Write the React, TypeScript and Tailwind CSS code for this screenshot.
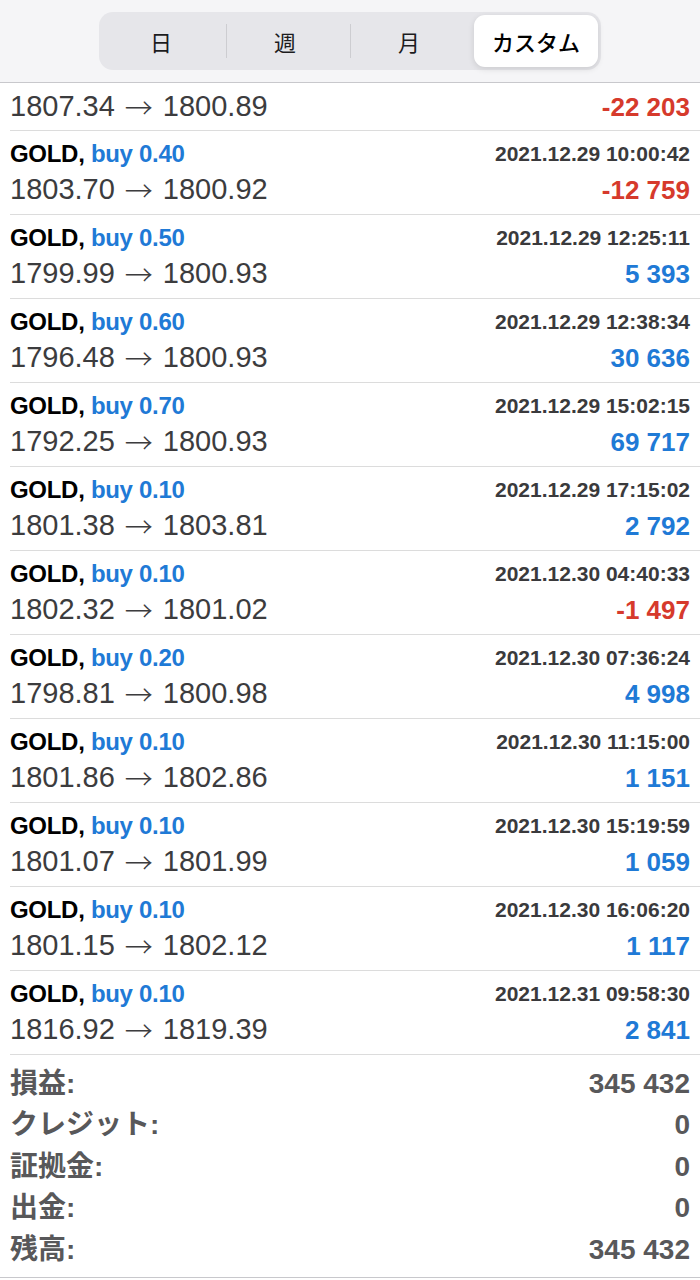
import React from 'react';

type Deal = {
  lot: string;
  time: string;
  open: string;
  close: string;
  profit: string;
};

const firstRow = { open: '1807.34', close: '1800.89', profit: '-22 203' };

const deals: Deal[] = [
  { lot: '0.40', time: '2021.12.29 10:00:42', open: '1803.70', close: '1800.92', profit: '-12 759' },
  { lot: '0.50', time: '2021.12.29 12:25:11', open: '1799.99', close: '1800.93', profit: '5 393' },
  { lot: '0.60', time: '2021.12.29 12:38:34', open: '1796.48', close: '1800.93', profit: '30 636' },
  { lot: '0.70', time: '2021.12.29 15:02:15', open: '1792.25', close: '1800.93', profit: '69 717' },
  { lot: '0.10', time: '2021.12.29 17:15:02', open: '1801.38', close: '1803.81', profit: '2 792' },
  { lot: '0.10', time: '2021.12.30 04:40:33', open: '1802.32', close: '1801.02', profit: '-1 497' },
  { lot: '0.20', time: '2021.12.30 07:36:24', open: '1798.81', close: '1800.98', profit: '4 998' },
  { lot: '0.10', time: '2021.12.30 11:15:00', open: '1801.86', close: '1802.86', profit: '1 151' },
  { lot: '0.10', time: '2021.12.30 15:19:59', open: '1801.07', close: '1801.99', profit: '1 059' },
  { lot: '0.10', time: '2021.12.30 16:06:20', open: '1801.15', close: '1802.12', profit: '1 117' },
  { lot: '0.10', time: '2021.12.31 09:58:30', open: '1816.92', close: '1819.39', profit: '2 841' },
];

const summary = [
  { label: '損益', value: '345 432' },
  { label: 'クレジット', value: '0' },
  { label: '証拠金', value: '0' },
  { label: '出金', value: '0' },
  { label: '残高', value: '345 432' },
];

const tabs = ['日', '週', '月', 'カスタム'];

function PriceLine({ open, close, profit }: { open: string; close: string; profit: string }) {
  const loss = profit.startsWith('-');
  return (
    <div className="flex h-[38px] items-center justify-between">
      <span className="flex items-center font-['Liberation_Sans',Arial,sans-serif] text-[29px] text-[#3c3c3e]">
        {open}
        <span className="mx-[10px] font-['Noto_Sans_CJK_JP',sans-serif] text-[28px] font-light">→</span>
        {close}
      </span>
      <span
        className={`font-['Liberation_Sans',Arial,sans-serif] text-[26px] font-bold ${
          loss ? 'text-[#d63a2c]' : 'text-[#1f7ad6]'
        }`}
      >
        {profit}
      </span>
    </div>
  );
}

function DealRow({ deal }: { deal: Deal }) {
  return (
    <div className="ml-[10px] border-b border-[#dcdcdc] pt-[6px] pb-[5px] pr-[10px]">
      <div className="flex h-[34px] items-center justify-between">
        <span className="font-['Liberation_Sans',Arial,sans-serif] text-[24px] font-bold tracking-[-0.3px]">
          <span className="text-black">GOLD, </span>
          <span className="text-[#1f7ad6]">buy {deal.lot}</span>
        </span>
        <span className="font-['Liberation_Sans',Arial,sans-serif] text-[21px] font-bold text-[#3a3a3c]">
          {deal.time}
        </span>
      </div>
      <PriceLine open={deal.open} close={deal.close} profit={deal.profit} />
    </div>
  );
}

export default function App() {
  return (
    <div className="h-[1280px] w-[700px] overflow-hidden bg-white">
      {/* Period selector */}
      <header className="flex h-[83px] items-start justify-center border-b border-[#c8c8cc] bg-[#f5f5f7] pt-[12px]">
        <div className="grid h-[58px] w-[502px] grid-cols-4 rounded-[14px] bg-[#e6e6ea] p-[3px]">
          {tabs.map((tab, i) => {
            const active = i === tabs.length - 1;
            return (
              <div key={tab} className="relative flex items-center justify-center">
                {i > 0 && i < tabs.length - 1 && (
                  <span className="absolute left-0 top-[9px] h-[34px] w-px bg-[#cdcdd1]" />
                )}
                <div
                  className={`flex h-full w-full items-center justify-center rounded-[11px] font-['Noto_Sans_CJK_JP',sans-serif] text-[22px] ${
                    active
                      ? 'bg-white font-medium text-black shadow-[0_2px_6px_rgba(0,0,0,0.12)]'
                      : 'pr-[6px] text-[#1c1c1e]'
                  }`}
                >
                  {tab}
                </div>
              </div>
            );
          })}
        </div>
      </header>

      {/* Deals: the first one is scrolled partly under the header */}
      <div className="ml-[10px] border-b border-[#dcdcdc] pt-[5px] pb-[4px] pr-[10px]">
        <PriceLine {...firstRow} />
      </div>
      {deals.map((d, i) => (
        <DealRow key={i} deal={d} />
      ))}

      {/* Totals */}
      <div className="border-b border-[#c8c8cc] pb-[6px] pt-[8px]">
        {summary.map((s) => (
          <div key={s.label} className="flex h-[41.5px] items-center justify-between px-[10px] text-[#58585a]">
            <span className="font-['Liberation_Sans','Noto_Sans_CJK_JP',sans-serif] text-[28px] font-bold">
              {s.label}:
            </span>
            <span className="font-['Liberation_Sans',Arial,sans-serif] text-[28px] font-bold">{s.value}</span>
          </div>
        ))}
      </div>
    </div>
  );
}
